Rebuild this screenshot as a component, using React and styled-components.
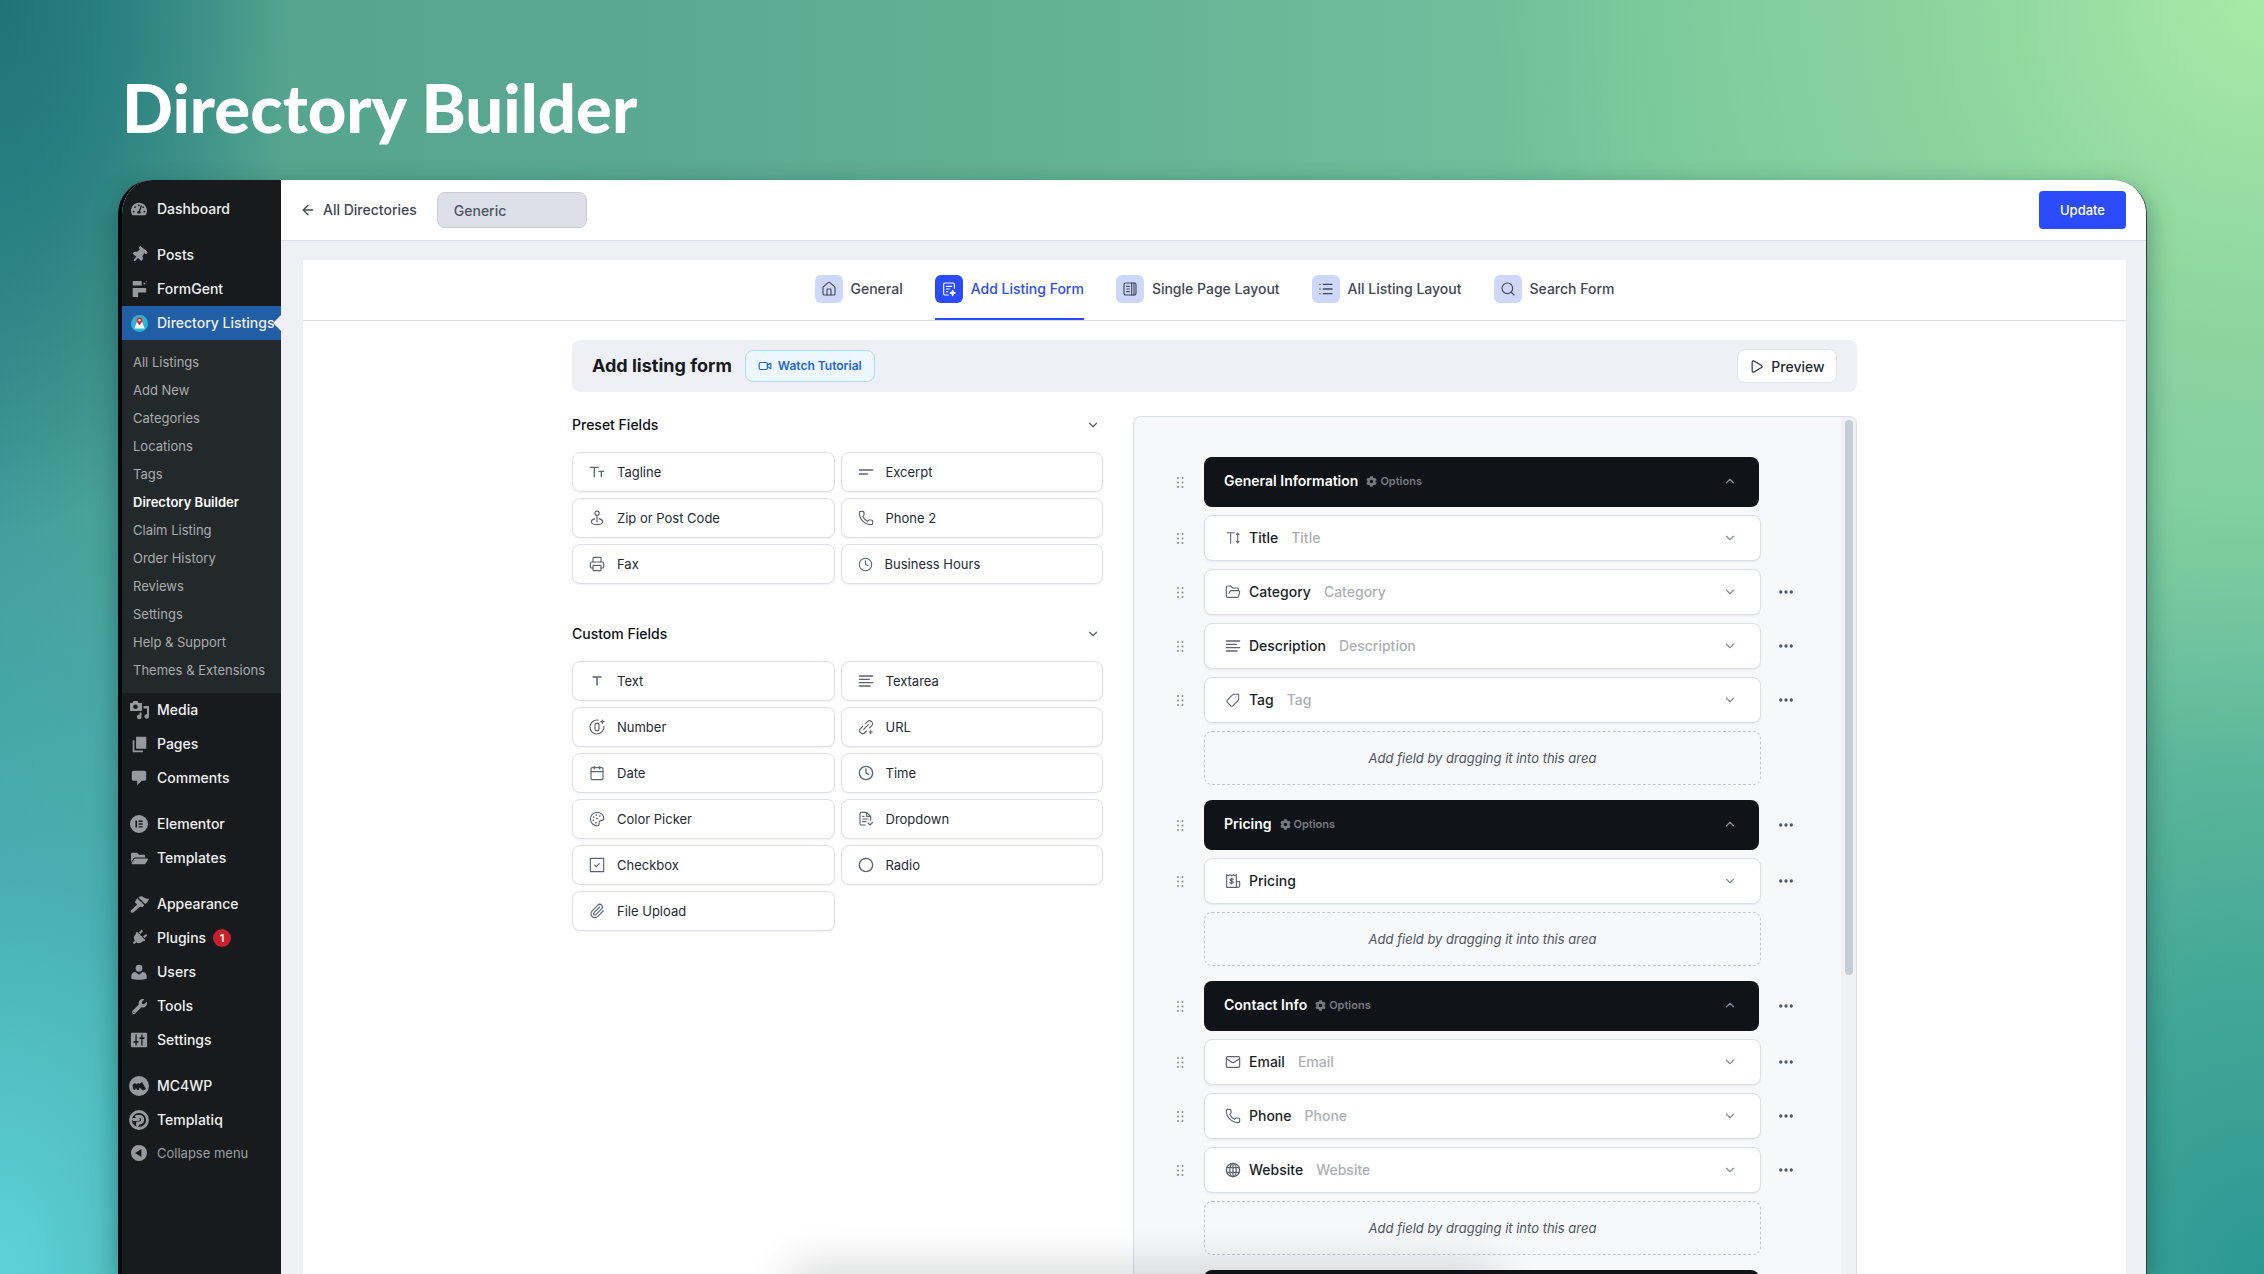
import React from "react";
import styled, { createGlobalStyle } from "styled-components";
import {
  ArrowLeft, House, List, Search, Video, Play, ChevronDown, ChevronUp, Phone, Printer, Clock,
  Calendar, Circle, Paperclip, FolderOpen, Mail, Ellipsis,
} from "lucide-react";
import {
  FaTachometerAlt, FaThumbtack, FaFolderOpen, FaPlug, FaWrench, FaCog,
} from "react-icons/fa";

const Global = createGlobalStyle`
  * { box-sizing: border-box; }
  html, body { margin: 0; height: 100%; overflow: hidden; }
  #root { height: 100%; }
  body, button, input { font-family: Inter, "Liberation Sans", sans-serif; }
  button { cursor: pointer; margin: 0; }
  a { text-decoration: none; color: inherit; }
  ul { list-style: none; margin: 0; padding: 0; }
  svg { flex: none; display: block; }
`;

const Stage = styled.div`
  position: relative;
  height: 100vh;
  overflow: hidden;
  display: flex;
  flex-direction: column;
  padding: 0 117px 0 118px;
  background:
    radial-gradient(ellipse 13% 42% at 0% 0%, #1f7479 0%, rgba(32, 120, 124, 0.75) 40%, rgba(40, 130, 128, 0) 100%),
    radial-gradient(ellipse 34% 60% at 100% 0%, #a9e9a6 0%, rgba(150, 220, 160, 0.6) 45%, rgba(120, 200, 155, 0) 100%),
    radial-gradient(ellipse 26% 75% at 0% 100%, #5cd3d8 0%, rgba(74, 180, 186, 0.8) 42%, rgba(60, 150, 148, 0) 100%),
    radial-gradient(ellipse 30% 62% at 100% 100%, #2c9893 0%, rgba(52, 158, 148, 0.8) 35%, rgba(100, 190, 160, 0) 100%),
    linear-gradient(90deg, #41968f 0%, #55a58f 12%, #5ba991 30%, #66b496 50%, #76c59c 75%, #78c9a0 100%);
`;

const Heading = styled.h1`
  margin: 0;
  height: 180px;
  padding: 65px 0 0 4px;
  font-family: Lato, sans-serif;
  font-weight: 900;
  font-size: 67px;
  line-height: 84px;
  color: #fff;
`;

const Frame = styled.div`
  flex: 1;
  min-height: 0;
  display: flex;
  overflow: hidden;
  border-left: 4px solid #03060d;
  border-right: 1px solid #333a3c;
  border-radius: 34px 34px 0 0;
  background: #eff0f5;
  box-shadow: 0 8px 26px rgba(10, 50, 50, 0.45);
`;

const Sidebar = styled.nav`
  width: 159px;
  flex: none;
  padding-top: 12px;
  background: #171b1d;
`;

const Group = styled.ul`
  & + & { margin-top: 12px; }
`;

const MenuLink = styled.a`
  height: ${(p) => (p.$muted ? 32 : 34)}px;
  display: flex;
  align-items: center;
  gap: 7px;
  padding-left: 6px;
  position: relative;
  white-space: nowrap;
  line-height: 20px;
  font-weight: ${(p) => (p.$muted ? 400 : 500)};
  font-size: ${(p) => (p.$muted ? 13 : 14)}px;
  color: ${(p) => (p.$muted ? "#9a9ea1" : "#f0f0f1")};
  background: ${(p) => (p.$active ? "#215ea6" : "transparent")};
`;

const IconSlot = styled.span`
  width: 22px;
  height: 20px;
  flex: none;
  display: flex;
  align-items: center;
  justify-content: center;
  color: #969a9e;
`;

const Pointer = styled.i`
  position: absolute;
  right: 0;
  top: 9px;
  border: solid transparent;
  border-width: 8px 8px 8px 0;
  border-right-color: #eff0f5;
`;

const Badge = styled.span`
  width: 18px;
  height: 18px;
  border-radius: 50%;
  background: #c9202d;
  color: #fff;
  font-size: 11px;
  font-weight: 600;
  line-height: 18px;
  text-align: center;
`;

const SubMenu = styled.ul`
  padding: 8px 0 9px;
  background: #23282b;
`;

const SubLink = styled.a`
  display: block;
  height: 28px;
  padding-left: 11px;
  font-size: 13px;
  line-height: 28px;
  white-space: nowrap;
  color: ${(p) => (p.$current ? "#fff" : "#a9acae")};
  font-weight: ${(p) => (p.$current ? 600 : 400)};
`;

const Main = styled.main`
  flex: 1;
  min-width: 0;
  display: flex;
  flex-direction: column;
`;

const TopBar = styled.header`
  height: 61px;
  flex: none;
  display: flex;
  align-items: center;
  padding: 0 20px 0 19px;
  background: #fff;
  border-bottom: 1px solid #dcdfe8;
`;

const BackLink = styled.a`
  display: flex;
  align-items: center;
  gap: 7px;
  margin-right: 20px;
  font-size: 14px;
  font-weight: 500;
  line-height: 20px;
  color: #3f4754;
`;

const NameInput = styled.input`
  width: 150px;
  height: 36px;
  padding: 0 16px;
  border: 1px solid #c8ccd4;
  border-radius: 8px;
  background: #dde0e9;
  color: #4d5561;
  font-size: 14px;
  font-weight: 500;
`;

const UpdateButton = styled.button`
  width: 87px;
  height: 38px;
  margin-left: auto;
  border: 0;
  border-radius: 4px;
  background: #2c4bfa;
  color: #fff;
  font-size: 13px;
  font-weight: 500;
`;

const Panel = styled.section`
  flex: 1;
  min-height: 0;
  display: flex;
  flex-direction: column;
  margin: 19px 20px 0 22px;
  background: #fff;
`;

const Tabs = styled.div`
  height: 61px;
  flex: none;
  display: flex;
  justify-content: center;
  gap: 32px;
  border-bottom: 1px solid #dcdfe8;
`;

const TabButton = styled.button`
  display: flex;
  align-items: center;
  gap: 8px;
  padding: 0;
  border: 0;
  border-bottom: 2px solid ${(p) => (p.$active ? "#2c4bfa" : "transparent")};
  background: none;
  font-size: 14px;
  line-height: 20px;
  font-weight: 500;
  color: ${(p) => (p.$active ? "#2c4bfa" : "#3f4754")};
`;

const TabIcon = styled.span`
  width: 28px;
  height: 28px;
  display: flex;
  align-items: center;
  justify-content: center;
  border-radius: 6px;
  background: ${(p) => (p.$active ? "#2c4bfa" : "#ced7fe")};
  color: ${(p) => (p.$active ? "#fff" : "#414958")};
`;

const Content = styled.div`
  width: 1285px;
  max-width: 100%;
  flex: 1;
  min-height: 0;
  margin: 0 auto;
  padding-top: 19px;
  display: flex;
  flex-direction: column;
`;

const TitleBar = styled.div`
  height: 52px;
  flex: none;
  display: flex;
  align-items: center;
  gap: 13px;
  padding: 0 20px;
  border-radius: 8px;
  background: #eff0f5;
`;

const Title = styled.h2`
  margin: 0;
  font-size: 18px;
  line-height: 26px;
  font-weight: 700;
  color: #161a20;
`;

const WatchLink = styled.a`
  height: 32px;
  display: flex;
  align-items: center;
  gap: 6px;
  padding: 0 12px;
  border: 1px solid #b0dcfb;
  border-radius: 8px;
  background: #edf7ff;
  color: #1b66e8;
  font-size: 12px;
  line-height: 18px;
  font-weight: 600;
`;

const PreviewButton = styled.button`
  height: 34px;
  width: 100px;
  margin-left: auto;
  display: flex;
  align-items: center;
  justify-content: center;
  gap: 7px;
  padding: 0;
  border: 1px solid #e1e4eb;
  border-radius: 8px;
  background: #fff;
  color: #252b35;
  font-size: 14px;
  font-weight: 500;
`;

const Columns = styled.div`
  flex: 1;
  min-height: 0;
  display: grid;
  grid-template-columns: minmax(0, 531px) minmax(0, 724px);
  justify-content: space-between;
`;

const FieldsColumn = styled.div`
  display: flex;
  flex-direction: column;
  gap: 40px;
  padding-top: 23px;
`;

const SectionToggle = styled.button`
  width: 100%;
  height: 20px;
  display: flex;
  align-items: center;
  justify-content: space-between;
  margin-bottom: 17px;
  padding: 0 3px 0 0;
  border: 0;
  background: none;
  font-size: 14px;
  line-height: 20px;
  font-weight: 500;
  color: #0c0f14;
  svg { color: #5a6372; }
`;

const FieldGrid = styled.div`
  display: grid;
  grid-template-columns: 1fr 1fr;
  gap: 6px;
`;

const FieldButton = styled.button`
  height: 40px;
  display: flex;
  align-items: center;
  gap: 12px;
  padding: 0 16px;
  border: 1px solid #dde0ea;
  border-radius: 8px;
  background: #fff;
  box-shadow: 0 1px 2px rgba(16, 24, 40, 0.06);
  color: #252b35;
  font-size: 13px;
  line-height: 20px;
  text-align: left;
  svg { color: #5a6474; }
`;

const Canvas = styled.div`
  margin-top: 24px;
  min-height: 0;
  display: flex;
  justify-content: space-between;
  overflow: hidden;
  border: 1px solid #dadee6;
  border-bottom: 0;
  border-radius: 8px 8px 0 0;
  background: #f7f8fa;
`;

const Groups = styled.div`
  flex: 1;
  min-width: 0;
  display: flex;
  flex-direction: column;
  gap: 15px;
  padding: 40px 47px 0 42px;
`;

const Track = styled.div`
  width: 15px;
  flex: none;
  padding: 3px 3px 0 4px;
  background: #eff1f5;
`;

const Thumb = styled.div`
  height: 555px;
  border-radius: 4px;
  background: #c7cdd4;
`;

const FormGroup = styled.section`
  display: grid;
  gap: 8px;
`;

const Row = styled.div`
  display: grid;
  grid-template-columns: 8px minmax(0, 1fr) 16px;
  align-items: center;
  column-gap: 17px;
`;

const GroupHeader = styled.div`
  height: 50px;
  margin-left: 3px;
  margin-right: 2px;
  display: flex;
  align-items: center;
  gap: 8px;
  padding: 0 22px 2px 20px;
  border-radius: 8px;
  background: #101318;
  color: #fff;
  font-size: 14px;
  line-height: 20px;
  font-weight: 600;
  & > :last-child { margin-left: auto; }
`;

const OptionsButton = styled.button`
  display: flex;
  align-items: center;
  gap: 3px;
  padding: 0;
  border: 0;
  background: none;
  color: #777a7f;
  font-size: 11px;
  line-height: 20px;
  font-weight: 600;
`;

const FieldCard = styled.div`
  height: 46px;
  margin-left: 3px;
  display: flex;
  align-items: center;
  padding: 0 23px 0 20px;
  border: 1px solid #dbdfe7;
  border-radius: 8px;
  background: #fff;
  box-shadow: 0 1px 2px rgba(16, 24, 40, 0.07);
  font-size: 14px;
  line-height: 20px;
  color: #1b1f27;
  svg { color: #5a6474; }
`;

const FieldName = styled.span`
  margin-left: 8px;
  font-weight: 500;
`;

const FieldHint = styled.span`
  margin-left: 13px;
  font-weight: 500;
  color: #adafb3;
`;

const Plain = styled.button`
  padding: 0;
  border: 0;
  background: none;
  display: flex;
  justify-content: center;
  margin-left: ${(p) => (p.$end ? "auto" : 0)};
  && svg { color: ${(p) => p.$tone || "#858c98"}; }
`;

const DropArea = styled.div`
  height: 54px;
  margin: 0 33px 0 28px;
  border: 1px dashed #c6c9ce;
  border-radius: 8px;
  display: flex;
  align-items: center;
  justify-content: center;
  font-size: 13px;
  line-height: 20px;
  font-style: italic;
  color: #4d5563;
`;

const BottomShade = styled.div`
  position: absolute;
  left: 35%;
  right: 34%;
  top: 100%;
  height: 20px;
  box-shadow: 0 0 44px rgba(10, 12, 20, 0.3);
`;

const Glyph = ({ size = 16, children, fill, box = 24, w = 1.7 }) => (
  <svg width={size} height={size} viewBox={`0 0 ${box} ${box}`} fill={fill ? "currentColor" : "none"}
    stroke={fill ? "none" : "currentColor"} strokeWidth={w} strokeLinecap="round" strokeLinejoin="round" aria-hidden="true">
    {children}
  </svg>
);

const FormGentIcon = () => (
  <Glyph size={18} fill box={20}><path d="M3 1h10v5H3zM15 3h2v2h-2zM18 1h1v1h-1zM3 9h15v5H9v5H3z" /></Glyph>
);
const DirectoristIcon = () => (
  <svg width="17" height="17" viewBox="0 0 20 20" aria-hidden="true">
    <circle cx="10" cy="10" r="10" fill="#2ab5d1" />
    <path d="M4 16l3-8h6l3 8z" fill="#fff" />
    <path d="M10 12C8 9.500 6.600 8 6.600 6a3.400 3.400 0 016.800 0c0 2-1.400 3.500-3.400 6z" fill="#e02b2b" />
    <circle cx="10" cy="6" r="1.400" fill="#fff" />
  </svg>
);
const MediaIcon = () => (
  <Glyph size={20} fill box={20}>
    <path fillRule="evenodd" d="M2 3h1.500l1-2h4l1 2H12c.6 0 1 .4 1 1v6c0 .6-.4 1-1 1H2c-.6 0-1-.4-1-1V4c0-.6.4-1 1-1zm4.500 1.500a2.300 2.300 0 100 4.600 2.300 2.300 0 000-4.600z" />
    <path d="M14.500 6H20v10.500a2.300 2.300 0 11-2-2.300V8.500h-3.500zM10.500 12.500H12.500v4.500a2.300 2.300 0 11-2-2.300z" />
  </Glyph>
);
const PagesIcon = () => (
  <Glyph size={17} fill box={20}><path d="M6 1h12v14H6zM2 5h2v12h10v2H2z" /></Glyph>
);
const CommentIcon = () => (
  <Glyph size={18} fill box={20}><path d="M4 2h12c1 0 2 1 2 2v7c0 1-1 2-2 2h-3l-5 5v-5H4c-1 0-2-1-2-2V4c0-1 1-2 2-2z" /></Glyph>
);
const ElementorIcon = () => (
  <Glyph size={18} fill box={20}>
    <path fillRule="evenodd" d="M10 0a10 10 0 110 20 10 10 0 010-20zM6 6v8h1.800V6zm3.500 0v1.700H14V6zm0 3.200v1.700H14V9.200zm0 3.200V14H14v-1.600z" />
  </Glyph>
);
const BrushIcon = () => (
  <Glyph size={19} fill box={20}><path d="M9 2.500C11 .8 13 1 14.500 2.500c1.500 1 3.500 1.500 5.500 1.500-.5 2-2 4.500-4 5.500zM7.500 3.500l7.500 7-2 2.500-2.500-1-7 6.500c-1.500 1-3.500-.7-2.300-2.300L7.500 10 5 7.500z" /></Glyph>
);
const UserIcon = () => (
  <Glyph size={18} fill box={20}><path d="M10 2a3.800 3.800 0 110 7.600A3.800 3.800 0 0110 2zM6 10l4 3 4-3c3 0 4.500 2 4.500 4.500v3c-5 1.500-12 1.500-17 0v-3C1.500 12 3 10 6 10z" /></Glyph>
);
const SlidersIcon = () => (
  <Glyph size={18} fill box={20}>
    <path fillRule="evenodd" d="M2 2h16c.6 0 1 .4 1 1v14c0 .6-.4 1-1 1H2c-.6 0-1-.4-1-1V3c0-.6.4-1 1-1zm4 2v7H4v2h2v3h1.500v-3h2v-2h-2V4zm6.500 0v3h-2v2h2v7H14V9h2V7h-2V4z" />
  </Glyph>
);
const McIcon = () => (
  <Glyph size={20} fill box={20}>
    <path fillRule="evenodd" d="M10 0a10 10 0 110 20 10 10 0 010-20zM3.500 9l1 5h2l.3-2.500L8 14h2l.5-2.500L14 14.500l3-1.500-4-7-2.500 2L9 7 7.500 8.500 6 7z" />
  </Glyph>
);
const TemplatiqIcon = () => (
  <Glyph size={20} w={2.800} box={20}>
    <circle cx="10" cy="10" r="8.500" />
    <path d="M4.500 9.500h5M7.500 6.500H11a3.300 3.300 0 010 6.500H8.500v2.500" />
  </Glyph>
);
const CollapseIcon = () => (
  <Glyph size={16} fill box={20}><path fillRule="evenodd" d="M10 0a10 10 0 110 20 10 10 0 010-20zm3 5l-8 5 8 5z" /></Glyph>
);

const FormTabIcon = () => (
  <Glyph size={16}><path d="M20 11V5a2 2 0 00-2-2H6a2 2 0 00-2 2v14a2 2 0 002 2h5M8 8h8M8 12h5M8 16h2" /><path fill="currentColor" d="M17.500 14l1.200 2.800 2.800 1.200-2.800 1.200-1.200 2.800-1.200-2.800-2.800-1.200 2.800-1.200z" /></Glyph>
);
const PageTabIcon = () => (
  <Glyph size={16}><rect x="3" y="3" width="18" height="18" rx="2.500" /><path d="M14.500 3v18M18 3v18M7 8h4M7 12h4M7 16h4" /></Glyph>
);
const TwoT = () => (
  <Glyph size={16} w={2}><path d="M2 5h12M8 5v14M15 11h7M18.500 11v8" /></Glyph>
);
const TitleIcon = () => (
  <Glyph size={16} w={1.6}><path d="M3 4h11M8.500 4v16M19 5v14M17 7l2-2.500L21 7M17 17l2 2.500 2-2.500" /></Glyph>
);
const SmallT = () => (
  <Glyph size={16} w={2.2}><path d="M6 6h12M12 6v12" /></Glyph>
);
const TwoLines = () => (
  <Glyph size={16} w={2}><path d="M2 9h20M2 15h12" /></Glyph>
);
const FourLines = () => (
  <Glyph size={16} w={2}><path d="M2 4.500h20M2 9.500h15M2 14.500h20M2 19.500h16" /></Glyph>
);
const PinIcon = () => (
  <Glyph size={16} w={1.8}><circle cx="12" cy="5" r="3.200" /><path d="M12 8.200V18M8.500 13.200C5.500 14 3.500 15.500 3.500 17.500c0 2.500 3.800 4.500 8.500 4.500s8.500-2 8.500-4.500c0-2-2-3.500-5-4.300" /></Glyph>
);
const NumberIcon = () => (
  <Glyph size={16}><path d="M13.500 1.600A10.500 10.500 0 1022.400 11" /><rect x="9" y="6.500" width="6" height="11" rx="2" /><path d="M20 1.500v5M17.500 4h5" /></Glyph>
);
const UrlIcon = () => (
  <Glyph size={16}><path d="M8.500 15.500l7-7M11 7l3.500-3.500a4.500 4.500 0 016.300 6.300L17 13.500M7 11l-3.700 3.700a4.500 4.500 0 006.300 6.300l2.900-3M19 17v5M16.500 19.500h5" /></Glyph>
);
const PaletteIcon = () => (
  <Glyph size={16}>
    <path d="M12 1.800a10.200 10.200 0 10.800 20.400c2-.2 2.600-1.700 2.300-3.300-.5-2.600.6-4.400 3-4.500 2.600 0 4.100-1 4.100-3.400C21.800 5.500 17.300 1.800 12 1.800z" />
    <path strokeWidth="2.600" d="M7 9v.01M11 6v.01M16 7.500v.01M6.500 14v.01M10.500 17.500v.01M12 11v.01" />
  </Glyph>
);
const DropdownIcon = () => (
  <Glyph size={16}><path d="M11 21H5a2 2 0 01-2-2V4a2 2 0 012-2h8l6 6v6M13 2v6h6M7 12h8M7 16h5M7 8h2M15 18l3 3 4-4" /></Glyph>
);
const CheckIcon = () => (
  <Glyph size={16}><rect x="2" y="2" width="20" height="20" /><path d="M8.500 12l2.500 2.500 4.500-4.500" /></Glyph>
);
const TagIcon = () => (
  <Glyph size={16} w={1.6}><path d="M20.500 3.500v7.200c0 .8-.3 1.500-.8 2l-8 8c-.9.9-2.200.9-3 0l-5.400-5.400c-.8-.8-.8-2.100 0-3l8-8c.5-.5 1.200-.8 2-.8z" /><path d="M16.500 7.500v.01" /></Glyph>
);
const GlobeIcon = () => (
  <Glyph size={16} w={1.9}><circle cx="12" cy="12" r="10" /><ellipse cx="12" cy="12" rx="4.800" ry="10" /><path d="M12 2v20M3 8.500h18M3 15.500h18" /></Glyph>
);
const ReceiptIcon = () => (
  <Glyph size={16}><path d="M2.500 21.500v-19L5 4l2.500-1.500L10 4l2.500-1.500L15 4l2-1.500v19zM17 13h5v6a2.500 2.500 0 01-2.500 2.500h-17M12.300 9.500c-1-1.500-4.800-1.300-4.800.7s4.800 1.300 4.800 3.500-3.800 2.200-4.800.6M10 7.500v9" /></Glyph>
);
const GripIcon = () => (
  <svg width="8" height="11" viewBox="0 0 8 11" fill="currentColor" aria-hidden="true">
    {[1, 5.500, 10].map((y) => [2, 6.500].map((x) => <circle key={`${x}-${y}`} cx={x} cy={y} r="1" />))}
  </svg>
);

const menu = [
  [["Dashboard", <FaTachometerAlt size={16} />]],
  [
    ["Posts", <FaThumbtack size={16} style={{ transform: "rotate(40deg)" }} />],
    ["FormGent", <FormGentIcon />],
    ["Directory Listings", <DirectoristIcon />],
    ["Media", <MediaIcon />],
    ["Pages", <PagesIcon />],
    ["Comments", <CommentIcon />],
  ],
  [["Elementor", <ElementorIcon />], ["Templates", <FaFolderOpen size={17} />]],
  [
    ["Appearance", <BrushIcon />],
    ["Plugins", <FaPlug size={16} style={{ transform: "rotate(45deg)" }} />],
    ["Users", <UserIcon />],
    ["Tools", <FaWrench size={15} />],
    ["Settings", <SlidersIcon />],
  ],
  [["MC4WP", <McIcon />], ["Templatiq", <TemplatiqIcon />], ["Collapse menu", <CollapseIcon />]],
];

const subItems = [
  "All Listings", "Add New", "Categories", "Locations", "Tags", "Directory Builder", "Claim Listing",
  "Order History", "Reviews", "Settings", "Help & Support", "Themes & Extensions",
];

const tabs = [
  ["General", <House size={16} strokeWidth={1.7} />],
  ["Add Listing Form", <FormTabIcon />],
  ["Single Page Layout", <PageTabIcon />],
  ["All Listing Layout", <List size={16} />],
  ["Search Form", <Search size={16} strokeWidth={1.7} />],
];

const L = { size: 16, strokeWidth: 1.7 };
const preset = [
  ["Tagline", <TwoT />], ["Excerpt", <TwoLines />],
  ["Zip or Post Code", <PinIcon />], ["Phone 2", <Phone {...L} />],
  ["Fax", <Printer {...L} />], ["Business Hours", <Clock {...L} size={15} />],
];
const custom = [
  ["Text", <SmallT />], ["Textarea", <FourLines />],
  ["Number", <NumberIcon />], ["URL", <UrlIcon />],
  ["Date", <Calendar {...L} />], ["Time", <Clock size={16} strokeWidth={2} />],
  ["Color Picker", <PaletteIcon />], ["Dropdown", <DropdownIcon />],
  ["Checkbox", <CheckIcon />], ["Radio", <Circle size={16} strokeWidth={2} />],
  ["File Upload", <Paperclip {...L} />],
];

const groups = [
  { name: "General Information", fixed: true, fields: [
    ["Title", "Title", <TitleIcon />, true], ["Category", "Category", <FolderOpen {...L} />],
    ["Description", "Description", <FourLines />], ["Tag", "Tag", <TagIcon />],
  ] },
  { name: "Pricing", fields: [["Pricing", "", <ReceiptIcon />]] },
  { name: "Contact Info", fields: [
    ["Email", "Email", <Mail {...L} />], ["Phone", "Phone", <Phone {...L} />], ["Website", "Website", <GlobeIcon />],
  ] },
];

function FieldSection({ title, items }) {
  return (
    <section>
      <SectionToggle type="button">{title}<ChevronDown size={14} strokeWidth={2.4} /></SectionToggle>
      <FieldGrid>
        {items.map(([label, icon]) => <FieldButton key={label} type="button">{icon}{label}</FieldButton>)}
      </FieldGrid>
    </section>
  );
}

const Grip = () => <Plain type="button" aria-label="Drag"><GripIcon /></Plain>;
const More = () => <Plain type="button" aria-label="More" $tone="#4d5563"><Ellipsis size={18} strokeWidth={2.4} /></Plain>;

export default function App() {
  return (
    <Stage>
      <Global />
      <Heading>Directory Builder</Heading>
      <Frame>
        <Sidebar>
          {menu.map((group, i) => (
            <Group key={i}>
              {group.map(([label, icon]) => {
                const active = label === "Directory Listings";
                return (
                  <li key={label}>
                    <MenuLink href="#" $active={active} $muted={label === "Collapse menu"}>
                      <IconSlot>{icon}</IconSlot>
                      {label}
                      {label === "Plugins" && <Badge>1</Badge>}
                      {active && <Pointer />}
                    </MenuLink>
                    {active && (
                      <SubMenu>
                        {subItems.map((s) => (
                          <li key={s}><SubLink href="#" $current={s === "Directory Builder"}>{s}</SubLink></li>
                        ))}
                      </SubMenu>
                    )}
                  </li>
                );
              })}
            </Group>
          ))}
        </Sidebar>
        <Main>
          <TopBar>
            <BackLink href="#"><ArrowLeft size={16} />All Directories</BackLink>
            <NameInput aria-label="Directory name" defaultValue="Generic" />
            <UpdateButton type="button">Update</UpdateButton>
          </TopBar>
          <Panel>
            <Tabs>
              {tabs.map(([label, icon], i) => (
                <TabButton key={label} type="button" $active={i === 1}>
                  <TabIcon $active={i === 1}>{icon}</TabIcon>{label}
                </TabButton>
              ))}
            </Tabs>
            <Content>
              <TitleBar>
                <Title>Add listing form</Title>
                <WatchLink href="#"><Video size={14} />Watch Tutorial</WatchLink>
                <PreviewButton type="button"><Play size={15} strokeWidth={1.8} />Preview</PreviewButton>
              </TitleBar>
              <Columns>
                <FieldsColumn>
                  <FieldSection title="Preset Fields" items={preset} />
                  <FieldSection title="Custom Fields" items={custom} />
                </FieldsColumn>
                <Canvas>
                  <Groups>
                    {groups.map((g) => (
                      <FormGroup key={g.name}>
                        <Row>
                          <Grip />
                          <GroupHeader>
                            {g.name}
                            <OptionsButton type="button"><FaCog size={11} />Options</OptionsButton>
                            <Plain type="button" aria-label="Collapse"><ChevronUp size={14} /></Plain>
                          </GroupHeader>
                          {!g.fixed && <More />}
                        </Row>
                        {g.fields.map(([name, hint, icon, fixed]) => (
                          <Row key={name}>
                            <Grip />
                            <FieldCard>
                              {icon}
                              <FieldName>{name}</FieldName>
                              {hint && <FieldHint>{hint}</FieldHint>}
                              <Plain type="button" aria-label="Expand" $end><ChevronDown size={14} /></Plain>
                            </FieldCard>
                            {!fixed && <More />}
                          </Row>
                        ))}
                        <DropArea>Add field by dragging it into this area</DropArea>
                      </FormGroup>
                    ))}
                    <Row>
                      <Grip />
                      <GroupHeader />
                      <More />
                    </Row>
                  </Groups>
                  <Track><Thumb /></Track>
                </Canvas>
              </Columns>
            </Content>
          </Panel>
        </Main>
      </Frame>
      <BottomShade />
    </Stage>
  );
}
